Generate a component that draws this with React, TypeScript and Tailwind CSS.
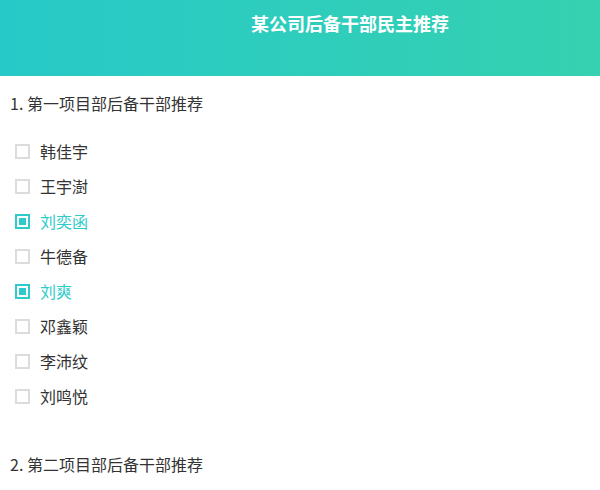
const font = { fontFamily: '"Microsoft YaHei", "Noto Sans CJK SC", "Noto Sans", sans-serif' };

const candidates = [
  { name: "韩佳宇", checked: false },
  { name: "王宇澍", checked: false },
  { name: "刘奕函", checked: true },
  { name: "牛德备", checked: false },
  { name: "刘爽", checked: true },
  { name: "邓鑫颖", checked: false },
  { name: "李沛纹", checked: false },
  { name: "刘鸣悦", checked: false },
];

function CheckItem({ name, checked }: { name: string; checked: boolean }): JSX.Element {
  return (
    <label className="flex h-[35px] items-center gap-[10px] pl-[5px]">
      {checked ? (
        <span className="mt-[2px] flex h-[15px] w-[15px] items-center justify-center border-2 border-[#2ecbca] bg-white">
          <span className="h-[7px] w-[7px] bg-[#2ecbca]" />
        </span>
      ) : (
        <span className="mt-[2px] h-[15px] w-[15px] border-2 border-[#dcdcdc] bg-white" />
      )}
      <span className={checked ? "text-[16px] text-[#2ecbca]" : "text-[16px] text-[#333]"}>{name}</span>
    </label>
  );
}

export default function App(): JSX.Element {
  return (
    <div className="min-h-[490px] w-[600px] bg-white" style={font}>
      <header className="flex h-[76px] justify-center bg-gradient-to-r from-[#27c9c8] to-[#35d1b0] pl-[100px] pt-[11px]">
        <h1 className="text-[18px] font-bold leading-[24px] text-white">某公司后备干部民主推荐</h1>
      </header>

      <section className="px-[10px]">
        <p className="mt-[15px] text-[16px] leading-[24px] text-[#333]">1. 第一项目部后备干部推荐</p>
        <div className="mt-[18px] flex flex-col">
          {candidates.map((c) => (
            <CheckItem key={c.name} name={c.name} checked={c.checked} />
          ))}
        </div>
        <p className="mt-[39px] text-[16px] leading-[24px] text-[#333]">2. 第二项目部后备干部推荐</p>
      </section>
    </div>
  );
}
